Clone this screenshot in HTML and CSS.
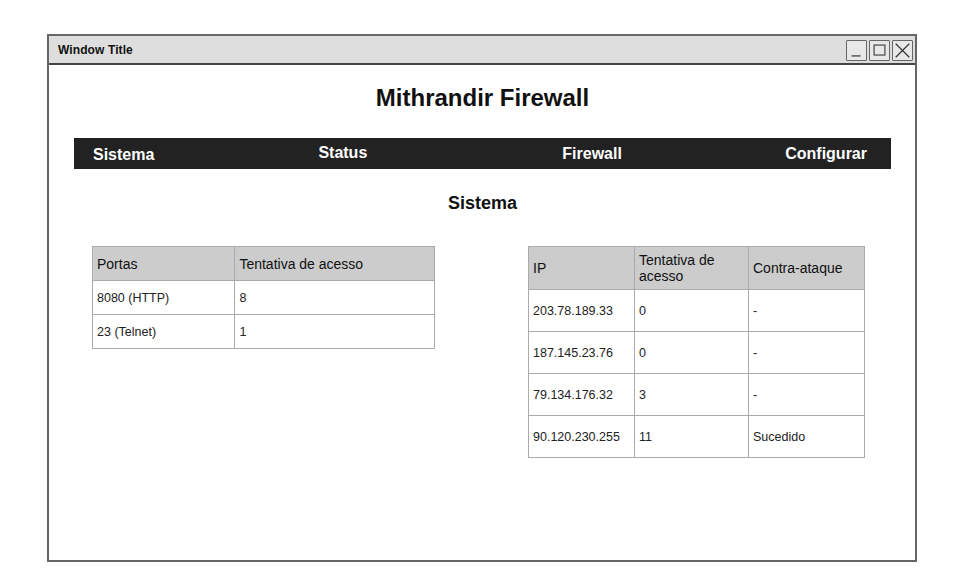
FILE: index.html
```html
<!DOCTYPE html>
<html>
<head>
<meta charset="utf-8">
<link rel="stylesheet" href="styles.css">
</head>
<body>
<div class="window">
  <div class="titlebar">
    <span class="title">Window Title</span>
    <div class="controls">
      <span class="ctl"><svg width="21" height="21" viewBox="0 0 21 21"><line x1="5" y1="16.5" x2="15" y2="16.5" stroke="#444" stroke-width="1.5"/></svg></span>
      <span class="ctl"><svg width="21" height="21" viewBox="0 0 21 21"><rect x="4.5" y="4.5" width="12" height="11" fill="none" stroke="#444" stroke-width="1.3"/></svg></span>
      <span class="ctl"><svg width="21" height="21" viewBox="0 0 21 21"><path d="M3 3 L18 18 M18 3 L3 18" stroke="#333" stroke-width="1.3"/></svg></span>
    </div>
  </div>
  <div class="content">
    <h1 class="heading">Mithrandir Firewall</h1>
    <nav class="nav">
      <span class="nav-item n1">Sistema</span>
      <span class="nav-item n2">Status</span>
      <span class="nav-item n3">Firewall</span>
      <span class="nav-item n4">Configurar</span>
    </nav>
    <h2 class="subheading">Sistema</h2>
    <div class="tables">
      <table class="grid left">
        <colgroup><col class="c1"><col class="c2"></colgroup>
        <tr class="head"><th>Portas</th><th>Tentativa de acesso</th></tr>
        <tr><td>8080 (HTTP)</td><td>8</td></tr>
        <tr><td>23 (Telnet)</td><td>1</td></tr>
      </table>
      <table class="grid right">
        <colgroup><col class="r1"><col class="r2"><col class="r3"></colgroup>
        <tr class="head"><th>IP</th><th>Tentativa de<br>acesso</th><th>Contra-ataque</th></tr>
        <tr><td>203.78.189.33</td><td>0</td><td>-</td></tr>
        <tr><td>187.145.23.76</td><td>0</td><td>-</td></tr>
        <tr><td>79.134.176.32</td><td>3</td><td>-</td></tr>
        <tr><td>90.120.230.255</td><td>11</td><td>Sucedido</td></tr>
      </table>
    </div>
  </div>
</div>
</body>
</html>
```
FILE: styles.css
```css
html, body {
  margin: 0;
  padding: 0;
  background: #fff;
}
body {
  font-family: "Liberation Sans", Arial, sans-serif;
  color: #111;
}
.window {
  margin: 34px 0 0 47px;
  width: 866px;
  height: 524px;
  border: 2px solid #666;
  display: flex;
  flex-direction: column;
}
.titlebar {
  height: 27px;
  background: #dedede;
  border-bottom: 2px solid #444;
  display: flex;
  align-items: center;
  justify-content: space-between;
  padding: 0 2px 0 9px;
}
.title {
  font-size: 12px;
  font-weight: bold;
  color: #111;
  letter-spacing: 0.1px;
}
.controls {
  display: flex;
  gap: 2px;
  margin-top: 2px;
}
.ctl {
  width: 19px;
  height: 19px;
  border: 1.5px solid #666;
  border-radius: 1px;
  background: #e8e8e8;
  display: flex;
  align-items: center;
  justify-content: center;
  overflow: hidden;
}
.ctl svg {
  display: block;
}
.content {
  flex: 1;
  padding: 0 24px 0 25px;
}
.heading {
  margin: 19px 0 0 0;
  font-size: 24px;
  line-height: 28px;
  text-align: center;
  font-weight: bold;
  color: #111;
}
.nav {
  margin-top: 26px;
  height: 31px;
  background: #222;
  display: flex;
  align-items: center;
  color: #fff;
  font-weight: bold;
  font-size: 16px;
  padding-right: 24px;
}
.nav-item { line-height: 20px; }
.n1 { margin-left: 19px; margin-top: 2px; }
.n2 { margin-left: 164px; margin-top: -2px; }
.n3 { margin-left: 195px; margin-top: 1px; }
.n4 { margin-left: auto; margin-top: 1px; }
.subheading {
  margin: 23px 0 0 0;
  text-align: center;
  font-size: 18px;
  line-height: 22px;
  font-weight: bold;
  color: #111;
}
.tables {
  margin-top: 32px;
  display: flex;
  align-items: flex-start;
  padding-left: 18px;
}
.grid {
  border-collapse: collapse;
  border: 1px solid #aaa;
  font-size: 12.5px;
  color: #222;
}
.grid th, .grid td {
  border: 1px solid #aaa;
  text-align: left;
  padding: 0 4px;
  vertical-align: middle;
}
.grid th {
  background: #cccccc;
  font-weight: normal;
  font-size: 14px;
  line-height: 16px;
  color: #111;
}
.left { width: 343px; }
.left .c1 { width: 142px; }
.left .c2 { width: 199px; }
.left .head th { height: 33px; }
.left td { height: 33px; }
.right {
  margin-left: 93px;
  width: 337px;
}
.right .r1 { width: 106px; }
.right .r2 { width: 114px; }
.right .r3 { width: 116px; }
.right .head th { height: 42px; }
.right td { height: 41px; }
```
